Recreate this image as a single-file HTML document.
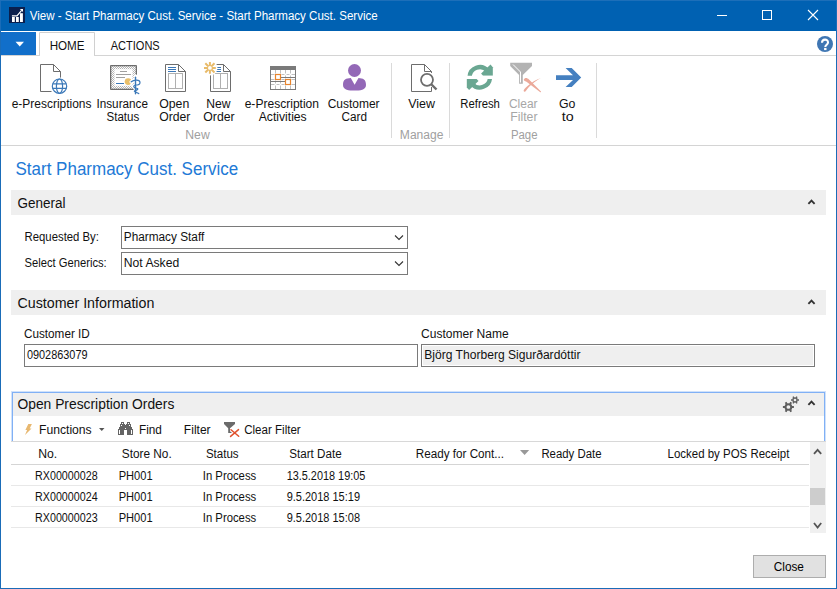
<!DOCTYPE html>
<html><head><meta charset="utf-8"><title>Start Pharmacy Cust. Service</title>
<style>
html,body{margin:0;padding:0;background:#fff;overflow:hidden}
#win{position:relative;width:837px;height:589px;overflow:hidden}
svg{display:block;font-family:"Liberation Sans", sans-serif}
</style></head><body>
<div id="win">
<svg width="837" height="589" viewBox="0 0 837 589" shape-rendering="auto">
<rect x="0" y="0" width="837" height="589" fill="#ffffff"/>
<rect x="0" y="0" width="837" height="31" fill="#0061b2"/>
<rect x="0" y="0" width="1" height="589" fill="#1a6cb8"/>
<rect x="836" y="0" width="1" height="589" fill="#1a6cb8"/>
<rect x="0" y="588" width="837" height="1" fill="#1a6cb8"/>
<rect x="0" y="0" width="837" height="1" fill="#1d6fb9"/>
<rect x="9" y="7" width="16" height="16" fill="#0a1f4d"/>
<g fill="#fff"><rect x="12" y="17" width="2.8" height="5"/><rect x="16" y="17" width="2.8" height="5"/><rect x="20" y="13.2" width="2.9" height="8.8"/></g>
<path d="M11.9 15.8 H17 L21.6 10.4" stroke="#fff" stroke-width="1.2" fill="none"/><path d="M19.8 8.9 L23 8.9 L23 12.1 Z" fill="#fff"/>
<text x="29.78" y="20" font-size="12" fill="#fff" textLength="347.94" lengthAdjust="spacingAndGlyphs" >View - Start Pharmacy Cust. Service - Start Pharmacy Cust. Service</text>
<rect x="717" y="15" width="10" height="1" fill="#fff"/>
<rect x="762.5" y="10.5" width="9" height="9" fill="none" stroke="#fff" stroke-width="1"/>
<path d="M808 10 L818 20 M818 10 L808 20" stroke="#fff" stroke-width="1.1"/>
<rect x="1" y="32" width="35" height="23" fill="#116fca"/>
<path d="M15.5 41.7 L24 41.7 L19.75 46.5 Z" fill="#fff"/>
<path d="M39.5 55 L39.5 32.5 L94.5 32.5 L94.5 55" fill="#fff" stroke="#d0d0d0" stroke-width="1"/>
<rect x="1" y="55" width="835" height="1" fill="#d4d4d4"/>
<rect x="40" y="55" width="54" height="1" fill="#fff"/>
<text x="49.65" y="50" font-size="12.5" fill="#111" textLength="34.90" lengthAdjust="spacingAndGlyphs" >HOME</text>
<text x="110.65" y="50" font-size="12.5" fill="#111" textLength="49.10" lengthAdjust="spacingAndGlyphs" >ACTIONS</text>
<circle cx="825" cy="44" r="8" fill="#3f76b3"/>
<path d="M822 42.8 C822 38.6 828 38.6 828 42.4 C828 44.6 825.3 44.8 825.3 47" fill="none" stroke="#fff" stroke-width="2.1"/><rect x="824.1" y="47.9" width="2.4" height="2.2" fill="#fff"/>
<rect x="1" y="145" width="835" height="1" fill="#d4d4d4"/>
<rect x="391" y="63" width="1" height="75" fill="#dadada"/>
<rect x="449" y="63" width="1" height="75" fill="#dadada"/>
<rect x="596" y="63" width="1" height="75" fill="#dadada"/>
<text x="11.68" y="108" font-size="12" fill="#111" textLength="79.84" lengthAdjust="spacingAndGlyphs" >e-Prescriptions</text>
<text x="96.48" y="108" font-size="12" fill="#111" textLength="51.54" lengthAdjust="spacingAndGlyphs" >Insurance</text>
<text x="106.48" y="121" font-size="12" fill="#111" textLength="32.74" lengthAdjust="spacingAndGlyphs" >Status</text>
<text x="159.18" y="108" font-size="12" fill="#111" textLength="30.04" lengthAdjust="spacingAndGlyphs" >Open</text>
<text x="159.18" y="121" font-size="12" fill="#111" textLength="31.14" lengthAdjust="spacingAndGlyphs" >Order</text>
<text x="206.28" y="108" font-size="12" fill="#111" textLength="24.24" lengthAdjust="spacingAndGlyphs" >New</text>
<text x="203.28" y="121" font-size="12" fill="#111" textLength="31.34" lengthAdjust="spacingAndGlyphs" >Order</text>
<text x="244.68" y="108" font-size="12" fill="#111" textLength="74.34" lengthAdjust="spacingAndGlyphs" >e-Prescription</text>
<text x="258.68" y="121" font-size="12" fill="#111" textLength="48.04" lengthAdjust="spacingAndGlyphs" >Activities</text>
<text x="327.68" y="108" font-size="12" fill="#111" textLength="51.94" lengthAdjust="spacingAndGlyphs" >Customer</text>
<text x="341.48" y="121" font-size="12" fill="#111" textLength="25.54" lengthAdjust="spacingAndGlyphs" >Card</text>
<text x="408.18" y="108" font-size="12" fill="#111" textLength="26.74" lengthAdjust="spacingAndGlyphs" >View</text>
<text x="460.28" y="108" font-size="12" fill="#111" textLength="39.64" lengthAdjust="spacingAndGlyphs" >Refresh</text>
<text x="558.98" y="108" font-size="12" fill="#111" textLength="16.44" lengthAdjust="spacingAndGlyphs" >Go</text>
<text x="561.68" y="121" font-size="12" fill="#111" textLength="11.94" lengthAdjust="spacingAndGlyphs" >to</text>
<text x="508.98" y="108" font-size="12" fill="#a6a6a6" textLength="28.54" lengthAdjust="spacingAndGlyphs" >Clear</text>
<text x="510.28" y="121" font-size="12" fill="#a6a6a6" textLength="27.24" lengthAdjust="spacingAndGlyphs" >Filter</text>
<text x="185.28" y="138.6" font-size="12" fill="#a0a0a0" textLength="24.44" lengthAdjust="spacingAndGlyphs" >New</text>
<text x="399.88" y="138.6" font-size="12" fill="#a0a0a0" textLength="43.54" lengthAdjust="spacingAndGlyphs" >Manage</text>
<text x="510.88" y="138.6" font-size="12" fill="#a0a0a0" textLength="26.64" lengthAdjust="spacingAndGlyphs" >Page</text>
<path d="M40.5 64.5 H53.5 L60.5 71.5 V77.8 M60.5 71.5 H53.5 V64.5 M51.5 91.5 H40.5 V64.5" fill="none" stroke="#6d6d6d" stroke-width="1"/>
<circle cx="59.5" cy="86.2" r="8.6" fill="#fff"/>
<g fill="none" stroke="#3b78b8" stroke-width="1.2"><circle cx="59.5" cy="86.2" r="7.2"/><ellipse cx="59.5" cy="86.2" rx="3.1" ry="7.2"/><path d="M52.7 83.8 H66.3 M52.7 88.4 H66.3"/></g>
<defs><pattern id="chk" width="2" height="2" patternUnits="userSpaceOnUse"><rect width="2" height="2" fill="#fff"/><rect width="1" height="1" fill="#b4b4b4"/><rect x="1" y="1" width="1" height="1" fill="#b4b4b4"/></pattern></defs>
<rect x="110" y="65" width="27" height="25" rx="1" fill="#6d6d6d"/>
<rect x="111.3" y="66.3" width="24.4" height="22.4" fill="url(#chk)"/>
<rect x="114.5" y="69.2" width="18" height="16.6" fill="#fff"/>
<g stroke="#a0a0a0" stroke-width="1"><path d="M120 71.5 H127 M116 74.5 H131 M116 77.5 H125"/></g>
<path d="M116 83.5 H124" stroke="#3b78b8" stroke-width="1"/>
<circle cx="128.1" cy="81.6" r="3.4" fill="#e8bf6a"/>
<g fill="none" stroke-linecap="round"><path d="M135.5 76 V95 M131.2 81.8 C134 79.5 140 79.5 140 82.4 C140 84.5 137 85 135.5 85 C132.5 86 133.5 88 137.5 88.5 C139 89.5 135 90.5 134.5 91.2 C136 92.5 138 92.8 138.8 93.6" stroke="#fff" stroke-width="3.6"/><path d="M135.5 77.3 V93.8" stroke="#3b78b8" stroke-width="1.4"/><path d="M131.2 81.8 C134 79.5 140 79.5 140 82.4 C140 84.5 137 85 135.5 85 C132.5 86 133.5 88 137.5 88.5 C139 89.5 135 90.5 134.5 91.2 C136 92.5 138 92.8 138.8 93.6" stroke="#3b78b8" stroke-width="1.2"/></g>
<path d="M165.5 64.5 H178.5 L185.5 71.5 V91.5 H165.5 Z M178.5 64.5 V71.5 H185.5" fill="none" stroke="#6d6d6d" stroke-width="1"/><g stroke="#3b78b8" stroke-width="1"><path d="M168 67.5 H176 M168 69.5 H176 M168 71.5 H176"/></g><rect x="168.5" y="73.5" width="14" height="15" fill="none" stroke="#b0b0b0" stroke-width="1"/><path d="M175.5 73.5 V88.5" stroke="#b0b0b0"/>
<path d="M210.5 75 V91.5 H230.5 V71.5 L223.5 64.5 H216 M223.5 64.5 V71.5 H230.5" fill="none" stroke="#6d6d6d" stroke-width="1"/><g stroke="#3b78b8" stroke-width="1"><path d="M216 67.5 H221 M216 69.5 H221 M216 71.5 H221"/></g><rect x="213.5" y="73.5" width="14" height="15" fill="none" stroke="#b0b0b0" stroke-width="1"/><path d="M220.5 73.5 V88.5" stroke="#b0b0b0"/>
<circle cx="209.9" cy="67.9" r="7.6" fill="#fff"/><g stroke="#e8bb6a" stroke-width="2" stroke-linecap="butt"><path d="M204 67.9 H215.8 M209.9 62 V73.8 M205.3 63.3 L214.5 72.5 M214.5 63.3 L205.3 72.5"/></g><circle cx="209.9" cy="67.9" r="1.9" fill="#fff"/>
<rect x="270.5" y="66.5" width="25" height="23" fill="#fff" stroke="#7a7a7a" stroke-width="1"/>
<rect x="270" y="66" width="26" height="4" fill="#7a7a7a"/>
<g stroke="#c0c0c0" stroke-width="1"><path d="M275.5 70 V73.5 M275.5 75.5 V78.5 M275.5 80.5 V83.5 M275.5 85.5 V89 M280.5 70 V73.5 M280.5 75.5 V78.5 M280.5 80.5 V83.5 M280.5 85.5 V89 M285.5 70 V73.5 M285.5 75.5 V78.5 M285.5 80.5 V83.5 M285.5 85.5 V89 M290.5 70 V73.5 M290.5 75.5 V78.5 M290.5 80.5 V83.5 M290.5 85.5 V89 M271 74.5 H274.5 M276.5 74.5 H279.5 M281.5 74.5 H284.5 M286.5 74.5 H289.5 M291.5 74.5 H295 M271 79.5 H274.5 M276.5 79.5 H279.5 M281.5 79.5 H284.5 M286.5 79.5 H289.5 M291.5 79.5 H295 M271 84.5 H274.5 M276.5 84.5 H279.5 M281.5 84.5 H284.5 M286.5 84.5 H289.5 M291.5 84.5 H295 "/></g>
<path d="M281 77.5 H295 M271 81.5 H285" stroke="#7a7a7a" stroke-width="1"/>
<rect x="275.5" y="74.5" width="5" height="5" fill="#fff" stroke="#e8842c" stroke-width="1.2"/>
<rect x="285.5" y="79.5" width="5" height="5" fill="#fff" stroke="#e8842c" stroke-width="1.2"/>
<circle cx="354.5" cy="70.5" r="6.5" fill="#9368b7"/>
<path d="M343 85 C343 79 346 78.5 350.8 78 L354.6 84.8 L358.5 78 C363 78.5 366 79 366 85 C366 90 360 90.6 354.5 90.6 C349 90.6 343 90 343 85 Z" fill="#9368b7"/>
<path d="M423 91.5 H411.5 V64.5 H424.5 L431.5 71.5 V73 M424.5 64.5 V71.5 H431.5 M431.5 87 V91.5 H423" fill="none" stroke="#6d6d6d" stroke-width="1"/>
<circle cx="427" cy="79.8" r="6" fill="#fff" stroke="#6d6d6d" stroke-width="1.8"/>
<path d="M431 84 L436.5 89.5" stroke="#6d6d6d" stroke-width="2.4"/>
<defs><clipPath id="rtop"><rect x="460" y="58" width="40" height="17.7"/></clipPath></defs>
<g id="rarc" clip-path="url(#rtop)"><path d="M469.65 77.3 A10.15 10.15 0 0 1 487.58 70.78" fill="none" stroke="#6aa792" stroke-width="4.3"/><path d="M481.1 73.5 L490.5 64.5 L492.8 67.2 L492.8 75.7 L483 75.7 Z" fill="#6aa792"/></g>
<use href="#rarc" transform="rotate(180 479.8 77.3)"/>
<path d="M510.2 62.8 H532 V66 L522.8 75 V83.8 H519.1 V75 L510.2 66 Z" fill="#b3b3b3"/>
<path d="M513 64.5 L520.5 72 V82.5" stroke="#fff" stroke-width="1" fill="none"/>
<path d="M523.8 79.5 C525 77.2 527 77.6 529 79.4 L541 91.6 C541.3 92.4 540.6 92.6 540 92.1 L526.5 81.8 C524.8 80.8 523.6 80.5 523.8 79.5 Z M540.8 78 C535 81 528.8 86.5 526.2 90.6 C525.2 92.2 523.8 92 523.6 90.8 C523.8 89.5 525.4 87.8 527.8 85.8 C531.5 82.6 536 79.8 540.8 78 Z" fill="#eba99a"/>
<path d="M556 75.2 H573 L565.6 67.9 H571.7 L581.2 77.5 L571.7 87 H565.6 L573 80 H556 Z" fill="#4580c0"/>
<text x="15.55" y="175" font-size="17.5" fill="#2179d6" textLength="222.70" lengthAdjust="spacingAndGlyphs" >Start Pharmacy Cust. Service</text>
<rect x="11" y="190" width="815" height="25" fill="#efefef"/><text x="17.56" y="208" font-size="14" fill="#111" textLength="47.98" lengthAdjust="spacingAndGlyphs" >General</text>
<path d="M808.4 203.8 L811.5 200.7 L814.6 203.8" fill="none" stroke="#333" stroke-width="1.9"/>
<text x="24.58" y="241" font-size="12" fill="#111" textLength="74.34" lengthAdjust="spacingAndGlyphs" >Requested By:</text>
<text x="24.58" y="267" font-size="12" fill="#111" textLength="82.14" lengthAdjust="spacingAndGlyphs" >Select Generics:</text>
<rect x="121.5" y="226.5" width="286" height="22" fill="#fff" stroke="#7a7a7a" stroke-width="1"/>
<rect x="121.5" y="252.5" width="286" height="22" fill="#fff" stroke="#7a7a7a" stroke-width="1"/>
<text x="123.78" y="241" font-size="12" fill="#111" textLength="80.54" lengthAdjust="spacingAndGlyphs" >Pharmacy Staff</text>
<text x="123.78" y="267" font-size="12" fill="#111" textLength="55.44" lengthAdjust="spacingAndGlyphs" >Not Asked</text>
<path d="M395 235.5 L399 239.5 L403 235.5" fill="none" stroke="#333" stroke-width="1.1"/>
<path d="M395 261.5 L399 265.5 L403 261.5" fill="none" stroke="#333" stroke-width="1.1"/>
<rect x="11" y="290" width="815" height="25" fill="#efefef"/><text x="17.56" y="308" font-size="14" fill="#111" textLength="136.78" lengthAdjust="spacingAndGlyphs" >Customer Information</text>
<path d="M808.4 303.8 L811.5 300.7 L814.6 303.8" fill="none" stroke="#333" stroke-width="1.9"/>
<text x="23.98" y="338" font-size="12" fill="#111" textLength="65.84" lengthAdjust="spacingAndGlyphs" >Customer ID</text>
<text x="421.08" y="338" font-size="12" fill="#111" textLength="87.64" lengthAdjust="spacingAndGlyphs" >Customer Name</text>
<rect x="24.5" y="344.5" width="393" height="22" fill="#fff" stroke="#7a7a7a" stroke-width="1"/>
<rect x="421.5" y="344.5" width="393" height="22" fill="#fff" stroke="#7a7a7a" stroke-width="1"/>
<rect x="423" y="346" width="390" height="19" fill="#efefef"/>
<text x="26.88" y="359" font-size="12" fill="#111" textLength="60.64" lengthAdjust="spacingAndGlyphs" >0902863079</text>
<text x="424.28" y="359" font-size="12" fill="#111" textLength="156.24" lengthAdjust="spacingAndGlyphs" >Björg Thorberg Sigurðardóttir</text>
<rect x="11" y="391" width="815" height="51" fill="#d0e2fb"/>
<rect x="12" y="392" width="813" height="50" fill="#80b0f5"/>
<rect x="13" y="393" width="811" height="23" fill="#efefef"/>
<rect x="13" y="416" width="811" height="25" fill="#ffffff"/>
<rect x="11" y="441" width="815" height="1" fill="#d8d8d8"/>
<text x="17.46" y="409" font-size="14" fill="#111" textLength="156.88" lengthAdjust="spacingAndGlyphs" >Open Prescription Orders</text>
<path d="M808.4 404.8 L811.5 401.7 L814.6 404.8" fill="none" stroke="#333" stroke-width="1.9"/>
<g fill="none" stroke="#5f5f5f"><circle cx="788.4" cy="407" r="2.86" stroke-width="1.98"/><path d="M791.70 407.00 L793.90 407.00 M790.05 409.86 L791.15 411.76 M786.75 409.86 L785.65 411.76 M785.10 407.00 L782.90 407.00 M786.75 404.14 L785.65 402.24 M790.05 404.14 L791.15 402.24 " stroke-width="1.98"/></g>
<g fill="none" stroke="#5f5f5f"><circle cx="795" cy="400" r="2.08" stroke-width="1.44"/><path d="M797.40 400.00 L799.00 400.00 M796.20 402.08 L797.00 403.46 M793.80 402.08 L793.00 403.46 M792.60 400.00 L791.00 400.00 M793.80 397.92 L793.00 396.54 M796.20 397.92 L797.00 396.54 " stroke-width="1.44"/></g>
<path d="M28.3 424 L31.9 424 L29.7 428.6 L31.5 428.6 L25 434.9 L27.1 430 L25.4 430 Z" fill="#e8b870"/>
<text x="38.98" y="434" font-size="12" fill="#111" textLength="52.74" lengthAdjust="spacingAndGlyphs" >Functions</text>
<path d="M99 428 L104.5 428 L101.75 431 Z" fill="#555"/>
<g fill="#646464" shape-rendering="crispEdges"><rect x="121" y="422" width="3" height="2"/><rect x="127" y="422" width="3" height="2"/><rect x="120" y="424" width="5" height="5"/><rect x="126" y="424" width="5" height="5"/><rect x="124" y="425" width="3" height="5"/><rect x="119" y="427" width="1" height="2"/><rect x="131" y="427" width="1" height="2"/><rect x="118" y="429" width="6" height="6"/><rect x="127" y="429" width="6" height="6"/></g>
<g fill="#fff" shape-rendering="crispEdges"><rect x="122" y="423" width="1" height="1"/><rect x="128" y="423" width="1" height="1"/><rect x="121" y="425" width="1" height="1"/><rect x="129" y="425" width="1" height="1"/><rect x="125" y="428" width="1" height="1"/><rect x="119" y="430" width="1" height="4"/><rect x="131" y="430" width="1" height="4"/></g>
<text x="138.98" y="434" font-size="12" fill="#111" textLength="22.94" lengthAdjust="spacingAndGlyphs" >Find</text>
<text x="183.88" y="434" font-size="12" fill="#111" textLength="26.74" lengthAdjust="spacingAndGlyphs" >Filter</text>
<path d="M224 422 H235 V424 L230 428.3 V431.6 H231.6 V433 H228.2 V428.3 L224 424 Z" fill="#6b6b6b"/>
<g stroke="#fff" stroke-width="3"><path d="M231 429.8 L238.7 436.3 M238.5 429.6 L230.6 436.4"/></g><g stroke="#e0522e" stroke-width="1.5" stroke-linecap="round"><path d="M231 429.8 L238.7 436.3 M238.5 429.6 L230.6 436.4"/></g>
<text x="244.18" y="434" font-size="12" fill="#111" textLength="56.54" lengthAdjust="spacingAndGlyphs" >Clear Filter</text>
<rect x="11" y="464" width="798" height="1" fill="#d5d5d5"/>
<rect x="11" y="485" width="798" height="1" fill="#e8e8e8"/>
<rect x="11" y="506" width="798" height="1" fill="#e8e8e8"/>
<rect x="11" y="527" width="798" height="1" fill="#e8e8e8"/>
<text x="38.18" y="458" font-size="12" fill="#111" textLength="19.04" lengthAdjust="spacingAndGlyphs" >No.</text>
<text x="121.78" y="458" font-size="12" fill="#111" textLength="49.94" lengthAdjust="spacingAndGlyphs" >Store No.</text>
<text x="205.88" y="458" font-size="12" fill="#111" textLength="32.74" lengthAdjust="spacingAndGlyphs" >Status</text>
<text x="289.28" y="458" font-size="12" fill="#111" textLength="52.34" lengthAdjust="spacingAndGlyphs" >Start Date</text>
<text x="415.78" y="458" font-size="12" fill="#111" textLength="88.34" lengthAdjust="spacingAndGlyphs" >Ready for Cont...</text>
<text x="541.38" y="458" font-size="12" fill="#111" textLength="60.14" lengthAdjust="spacingAndGlyphs" >Ready Date</text>
<text x="667.58" y="458" font-size="12" fill="#111" textLength="121.74" lengthAdjust="spacingAndGlyphs" >Locked by POS Receipt</text>
<path d="M520 450 L529.2 450 L524.6 455 Z" fill="#999"/>
<text x="35.08" y="480" font-size="12" fill="#111" textLength="62.54" lengthAdjust="spacingAndGlyphs" >RX00000028</text>
<text x="118.68" y="480" font-size="12" fill="#111" textLength="33.94" lengthAdjust="spacingAndGlyphs" >PH001</text>
<text x="202.78" y="480" font-size="12" fill="#111" textLength="53.44" lengthAdjust="spacingAndGlyphs" >In Process</text>
<text x="286.68" y="480" font-size="12" fill="#111" textLength="78.64" lengthAdjust="spacingAndGlyphs" >13.5.2018 19:05</text>
<text x="35.08" y="501" font-size="12" fill="#111" textLength="62.54" lengthAdjust="spacingAndGlyphs" >RX00000024</text>
<text x="118.68" y="501" font-size="12" fill="#111" textLength="33.94" lengthAdjust="spacingAndGlyphs" >PH001</text>
<text x="202.78" y="501" font-size="12" fill="#111" textLength="53.44" lengthAdjust="spacingAndGlyphs" >In Process</text>
<text x="286.68" y="501" font-size="12" fill="#111" textLength="73.34" lengthAdjust="spacingAndGlyphs" >9.5.2018 15:19</text>
<text x="35.08" y="522" font-size="12" fill="#111" textLength="62.54" lengthAdjust="spacingAndGlyphs" >RX00000023</text>
<text x="118.68" y="522" font-size="12" fill="#111" textLength="33.94" lengthAdjust="spacingAndGlyphs" >PH001</text>
<text x="202.78" y="522" font-size="12" fill="#111" textLength="53.44" lengthAdjust="spacingAndGlyphs" >In Process</text>
<text x="286.68" y="522" font-size="12" fill="#111" textLength="73.34" lengthAdjust="spacingAndGlyphs" >9.5.2018 15:08</text>
<rect x="810" y="442" width="16" height="91" fill="#f0f0f0"/>
<path d="M814 453.8 L817.6 449.8 L821.2 453.8" fill="none" stroke="#555" stroke-width="1.8"/>
<rect x="810" y="488" width="15" height="17" fill="#cdcdcd"/>
<path d="M814 523 L817.6 527.5 L821.2 523" fill="none" stroke="#555" stroke-width="1.8"/>
<rect x="753.5" y="555.5" width="72" height="22" fill="#e1e1e1" stroke="#adadad" stroke-width="1"/>
<text x="773.78" y="571" font-size="12" fill="#000" textLength="30.14" lengthAdjust="spacingAndGlyphs" >Close</text>
</svg>
</div>
</body></html>
